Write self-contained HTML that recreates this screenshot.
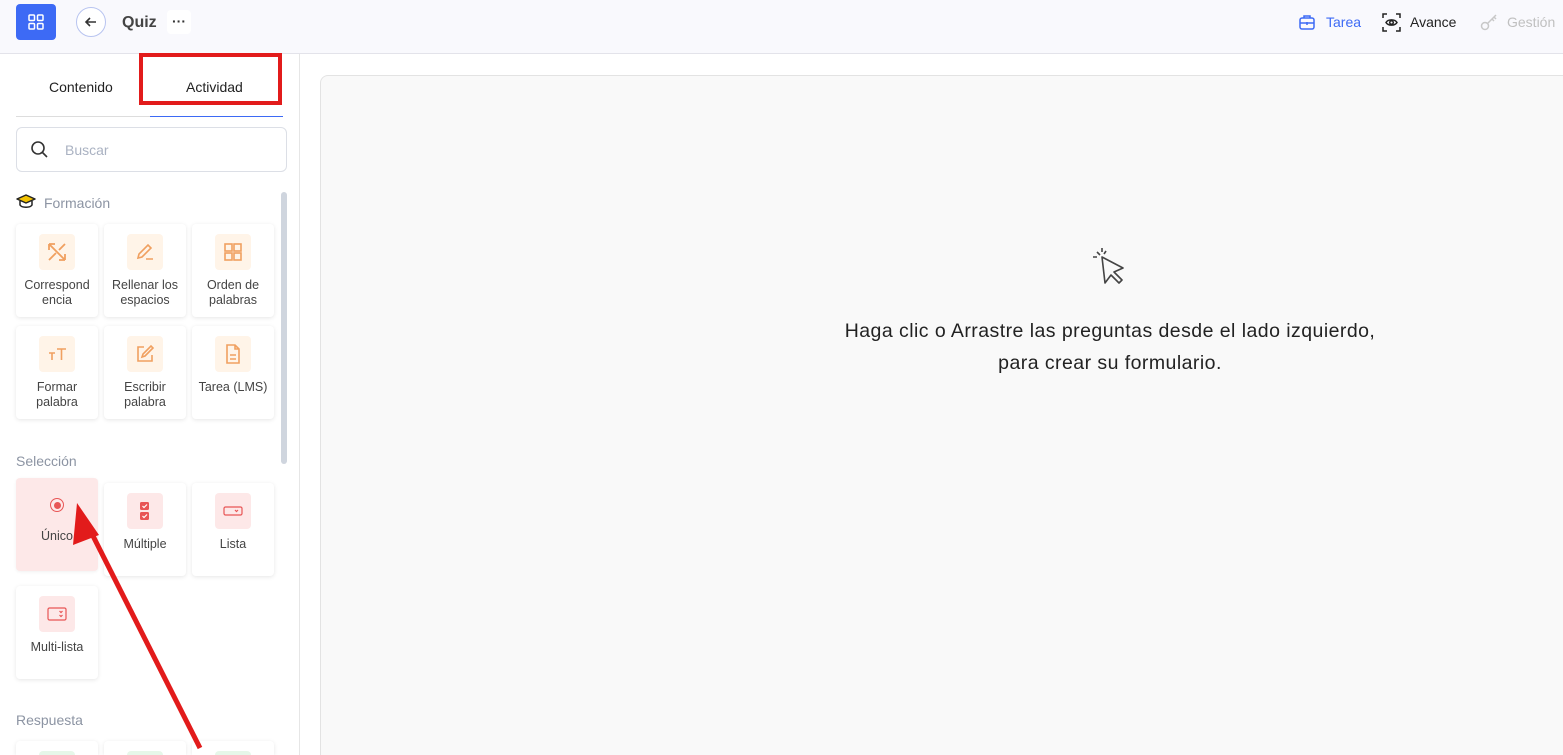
<!DOCTYPE html>
<html style="width:1563px;height:755px;overflow:hidden"><head><meta charset="utf-8"><style>
*{box-sizing:border-box;margin:0;padding:0}
body{width:1563px;height:755px;overflow:hidden;background:#fff;font-family:"Liberation Sans",sans-serif;position:relative;color:#333}
.top{position:absolute;left:0;top:0;width:1563px;height:54px;background:#f9f9fd;border-bottom:1px solid #e3e3ea}
.abs{position:absolute}
.card{position:absolute;width:82px;height:93px;background:#fff;border-radius:4px;box-shadow:0 1px 4px rgba(0,0,0,.1);text-align:center;font-size:12.5px;color:#444;line-height:15px}
.ic{width:36px;height:36px;border-radius:4px;background:#fff4e8;margin:10px auto 8px;display:flex;align-items:center;justify-content:center}
.ic.r{background:#fde8e8}
.lbl{position:absolute;left:16px;font-size:14px;color:#8c94a3}
</style></head><body>
<div class="top">
 <div class="abs" style="left:16px;top:4px;width:40px;height:36px;background:#3d6af5;border-radius:4px;display:flex;align-items:center;justify-content:center">
  <svg width="18" height="18" viewBox="0 0 18 18" fill="none" stroke="#fff" stroke-width="1.5"><rect x="2" y="2" width="5.5" height="5.5" rx="1"/><rect x="10.5" y="2" width="5.5" height="5.5" rx="1"/><rect x="2" y="10.5" width="5.5" height="5.5" rx="1"/><rect x="10.5" y="10.5" width="5.5" height="5.5" rx="1"/></svg></div>
 <div class="abs" style="left:76px;top:7px;width:30px;height:30px;border:1px solid #b8c4f0;border-radius:50%;background:#fff;display:flex;align-items:center;justify-content:center">
  <svg width="14" height="14" viewBox="0 0 14 14" fill="none" stroke="#333" stroke-width="1.6"><path d="M12 7H2M6 3L2 7l4 4"/></svg></div>
 <div class="abs" style="left:122px;top:14px;font-size:16px;font-weight:bold;color:#444">Quiz</div>
 <div class="abs" style="left:167px;top:10px;width:24px;height:24px;background:#fff;border-radius:4px;text-align:center;font-size:14px;line-height:22px;font-weight:bold;color:#333">···</div>
 <svg class="abs" style="left:1298px;top:13px" width="18" height="18" viewBox="0 0 18 18" fill="none" stroke="#3d6af5" stroke-width="1.5"><rect x="2" y="5" width="14" height="11" rx="2"/><path d="M6 5V3h6v2M2 10h14M9 9v3"/></svg>
 <div class="abs" style="left:1326px;top:14px;font-size:14px;color:#3d6af5">Tarea</div>
 <svg class="abs" style="left:1382px;top:13px" width="19" height="19" viewBox="0 0 19 19" fill="none" stroke="#222" stroke-width="1.5"><path d="M1 5V1h4M14 1h4v4M18 14v4h-4M5 18H1v-4"/><path d="M4 9.5C6 6 13 6 15 9.5 13 13 6 13 4 9.5z"/><circle cx="9.5" cy="9.5" r="1.8"/></svg>
 <div class="abs" style="left:1410px;top:14px;font-size:14px;color:#222">Avance</div>
 <svg class="abs" style="left:1480px;top:13px" width="18" height="18" viewBox="0 0 18 18" fill="none" stroke="#c8c8c8" stroke-width="1.5"><circle cx="5" cy="13" r="3.5"/><path d="M7.5 10.5L16 2M12 6l2 2M14 4l2 2"/></svg>
 <div class="abs" style="left:1507px;top:14px;font-size:14px;color:#c0c0c0">Gestión</div>
</div>
<div class="abs" style="left:299px;top:54px;width:1px;height:701px;background:#e6e6e6"></div>
<div class="abs" style="left:49px;top:79px;font-size:14px;color:#222">Contenido</div>
<div class="abs" style="left:186px;top:79px;font-size:14px;color:#222">Actividad</div>
<div class="abs" style="left:16px;top:116px;width:134px;height:1px;background:#ddd"></div>
<div class="abs" style="left:150px;top:116px;width:133px;height:1px;background:#3d6af5"></div>
<div class="abs" style="left:16px;top:127px;width:271px;height:45px;border:1px solid #dcdfe6;border-radius:6px"></div>
<svg class="abs" style="left:30px;top:140px" width="19" height="19" viewBox="0 0 19 19" fill="none" stroke="#333" stroke-width="1.6"><circle cx="8" cy="8" r="6"/><path d="M12.5 12.5L17 17"/></svg>
<div class="abs" style="left:65px;top:142px;font-size:14px;color:#aab2c2">Buscar</div>
<div class="abs" style="left:281px;top:192px;width:6px;height:272px;background:#cfd5de;border-radius:3px"></div>
<svg class="abs" style="left:16px;top:194px" width="20" height="16" viewBox="0 0 20 16"><path d="M10 1L1 5l9 4 9-4z" fill="#f2c200" stroke="#222" stroke-width="1.5" stroke-linejoin="round"/><path d="M4 7v4c2 3 10 3 12 0V7" fill="none" stroke="#222" stroke-width="1.5"/></svg>
<div class="lbl" style="left:44px;top:195px">Formación</div>

<div class="card" style="left:16px;top:224px"><div class="ic"><svg width="22" height="22" viewBox="0 0 22 22" fill="none" stroke="#f0a060" stroke-width="1.8"><path d="M3 3l16 16M3 3v6M3 3h6M3 19l7-7M19 19h-6M19 19v-6M13 9l6-6"/></svg></div>Correspond<br>encia</div>
<div class="card" style="left:104px;top:224px"><div class="ic"><svg width="22" height="22" viewBox="0 0 22 22" fill="none" stroke="#f0a060" stroke-width="1.6"><path d="M4 17l1-4 9-9 3 3-9 9zM12 18h7"/></svg></div>Rellenar los<br>espacios</div>
<div class="card" style="left:192px;top:224px"><div class="ic"><svg width="22" height="22" viewBox="0 0 22 22" fill="none" stroke="#f0a060" stroke-width="1.6"><rect x="3" y="3" width="7" height="7"/><rect x="12" y="3" width="7" height="7"/><rect x="3" y="12" width="7" height="7"/><rect x="12" y="12" width="7" height="7"/></svg></div>Orden de<br>palabras</div>
<div class="card" style="left:16px;top:326px"><div class="ic"><svg width="22" height="22" viewBox="0 0 22 22" fill="none" stroke="#f0a060" stroke-width="1.6"><path d="M3 10h6M6 10v7M11 6h9M15.5 6v11"/></svg></div>Formar<br>palabra</div>
<div class="card" style="left:104px;top:326px"><div class="ic"><svg width="22" height="22" viewBox="0 0 22 22" fill="none" stroke="#f0a060" stroke-width="1.6"><path d="M10 4H4v14h14v-6M8 14l1-3 8-8 2 2-8 8z"/></svg></div>Escribir<br>palabra</div>
<div class="card" style="left:192px;top:326px"><div class="ic"><svg width="22" height="22" viewBox="0 0 22 22" fill="none" stroke="#f0a060" stroke-width="1.6"><path d="M5 2h8l4 4v14H5zM13 2v4h4M8 12h6M8 16h6"/></svg></div>Tarea (LMS)</div>

<div class="lbl" style="top:453px">Selección</div>
<div class="card" style="left:16px;top:478px;background:#fde8e8;box-shadow:0 1px 3px rgba(0,0,0,.06)"><div style="margin:20px auto 17px;width:14px;height:14px;border:1.5px solid #e85555;border-radius:50%;display:flex;align-items:center;justify-content:center"><div style="width:7px;height:7px;background:#e85555;border-radius:50%"></div></div>Único</div>
<div class="card" style="left:104px;top:483px"><div class="ic r"><svg width="22" height="22" viewBox="0 0 22 22"><rect x="6" y="2" width="9" height="8" rx="1.5" fill="#e85555"/><rect x="6" y="12" width="9" height="8" rx="1.5" fill="#e85555"/><path d="M8.5 6l1.5 1.5 3-3M8.5 16l1.5 1.5 3-3" stroke="#fff" fill="none" stroke-width="1.2"/></svg></div>Múltiple</div>
<div class="card" style="left:192px;top:483px"><div class="ic r"><svg width="22" height="22" viewBox="0 0 22 22" fill="none" stroke="#e85555" stroke-width="1.2"><rect x="2" y="7" width="18" height="8" rx="1.5"/><path d="M13 10l1.5 1.5L16 10"/></svg></div>Lista</div>
<div class="card" style="left:16px;top:586px"><div class="ic r"><svg width="22" height="22" viewBox="0 0 22 22" fill="none" stroke="#e85555" stroke-width="1.2"><rect x="2" y="5" width="18" height="12" rx="1.5"/><path d="M13.5 8l1.5 1.5L16.5 8M13.5 12l1.5 1.5 1.5-1.5"/></svg></div>Multi-lista</div>

<div class="lbl" style="top:712px">Respuesta</div>
<div class="card" style="left:16px;top:741px;height:14px;border-radius:4px 4px 0 0"><div class="ic" style="background:#e6f7e9"></div></div>
<div class="card" style="left:104px;top:741px;height:14px;border-radius:4px 4px 0 0"><div class="ic" style="background:#e6f7e9"></div></div>
<div class="card" style="left:192px;top:741px;height:14px;border-radius:4px 4px 0 0"><div class="ic" style="background:#e6f7e9"></div></div>

<div class="abs" style="left:320px;top:75px;width:1243px;height:680px;background:#f9f9f9;border:1px solid #e3e3e3;border-bottom:none;border-right:none;border-radius:8px 0 0 0"></div>
<svg class="abs" style="left:1092px;top:247px" width="32" height="40" viewBox="0 0 32 40" fill="none" stroke="#444" stroke-width="1.6"><path d="M10 10l3 26 6-8 8 8 3-3-8-8 9-4z" stroke-linejoin="round"/><path d="M5 5l3 3M10 1v4M1 10h4M14 4l-2 3" /></svg>
<div class="abs" style="left:780px;top:315px;width:660px;text-align:center;font-size:19.5px;letter-spacing:0.45px;line-height:32px;color:#222">Haga clic o Arrastre las preguntas desde el lado izquierdo,<br>para crear su formulario.</div>

<div class="abs" style="left:139px;top:53px;width:143px;height:52px;border:4px solid #e21b1b"></div>
<svg class="abs" style="left:0;top:0" width="300" height="755"><line x1="200" y1="748" x2="90" y2="530" stroke="#e21b1b" stroke-width="5"/><polygon points="77,503 99,535 73,545" fill="#e21b1b"/></svg>
</body></html>
